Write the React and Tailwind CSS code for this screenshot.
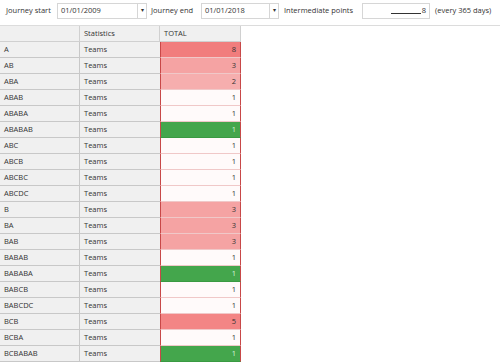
import React from 'react';

const rows = [
  ['A', 8], ['AB', 3], ['ABA', 2], ['ABAB', 1], ['ABABA', 1], ['ABABAB', 1, 'g'],
  ['ABC', 1], ['ABCB', 1], ['ABCBC', 1], ['ABCDC', 1], ['B', 3], ['BA', 3],
  ['BAB', 3], ['BABAB', 1], ['BABABA', 1, 'g'], ['BABCB', 1], ['BABCDC', 1],
  ['BCB', 5], ['BCBA', 1], ['BCBABAB', 1, 'g'],
];

const heat = {
  8: 'bg-[#f17d7d]',
  5: 'bg-[#f38585]',
  3: 'bg-[#f5a3a3]',
  2: 'bg-[#f6aeae]',
  1: 'bg-[#fffafa]',
};

function DateBox({ value, width }) {
  return (
    <div className={`flex h-[16px] items-center border border-[#d6d6d6] bg-white ${width}`}>
      <span className="flex-1 pl-[3px] text-[#333]">{value}</span>
      <span className="flex h-full w-[9px] items-center justify-center border-l border-[#d6d6d6] text-[6px] text-[#333]">▾</span>
    </div>
  );
}

export default function App() {
  return (
    <div className="h-[362px] w-[500px] overflow-hidden whitespace-nowrap bg-white text-[7.5px] text-[#333]" style={{ fontFamily: '"Open Sans", "Noto Sans", sans-serif' }}>
      <div className="flex h-[26px] items-center border-b border-[#dcdcdc] pb-[4px] pl-[6px]">
        <span className="w-[51px]">Journey start</span>
        <DateBox value="01/01/2009" width="w-[90px]" />
        <span className="ml-[4px] w-[50px]">Journey end</span>
        <DateBox value="01/01/2018" width="w-[78px]" />
        <span className="ml-[5px] w-[78px]">Intermediate points</span>
        <div className="flex h-[16px] w-[68px] items-center justify-end border border-[#d6d6d6] bg-white pr-[3px]">
          <span className="mr-[1px] mt-[5px] h-px w-[30px] bg-[#333]" />
          <span>8</span>
        </div>
        <span className="ml-[5px]">(every 365 days)</span>
      </div>

      <div className="w-[241px]">
        <div className="grid h-[16px] grid-cols-[80px_80px_81px] border-b border-[#d0d0d0] bg-[#f0f0f0]">
          <div className="border-r border-[#d0d0d0]" />
          <div className="flex items-center border-r border-[#d0d0d0] pl-[4px]">Statistics</div>
          <div className="flex items-center border-r border-[#d0d0d0] pl-[4px]">TOTAL</div>
        </div>
        {rows.map(([name, val, g]) => (
          <div key={name} className="grid h-[16px] grid-cols-[80px_80px_81px]">
            <div className="flex items-center border-b border-r border-[#c8c8c8] bg-[#f0f0f0] pl-[4px]">{name}</div>
            <div className="flex items-center border-b border-[#c8c8c8] bg-[#f0f0f0] pl-[4px]">Teams</div>
            <div
              className={
                g
                  ? 'flex items-center justify-end border-x border-b border-x-[#c84848] border-b-[#3a9a42] bg-[#44a64c] pr-[4px] text-[#d8f5d8]'
                  : `flex items-center justify-end border-x border-b border-x-[#c84848] border-b-[#f0c8c8] pr-[4px] ${heat[val]}`
              }
            >
              {val}
            </div>
          </div>
        ))}
      </div>
    </div>
  );
}
